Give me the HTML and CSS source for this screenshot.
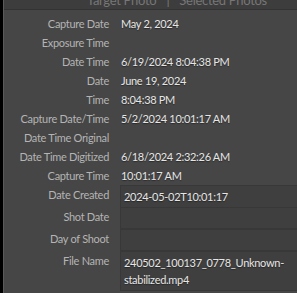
FILE: index.html
```html
<!DOCTYPE html>
<html lang="en">
<head>
  <meta charset="UTF-8" />
  <title>Metadata</title>
  <link rel="stylesheet" href="styles.css">
</head>
<body>
  <div class="panel">
    <div class="tabs">
      <span>Target Photo</span><span class="sep">|</span><span>Selected Photos</span>
    </div>
    <div class="fields">
      <div class="row"><span class="label">Capture Date</span><span class="value">May 2, 2024</span></div>
      <div class="row"><span class="label">Exposure Time</span><span class="value"></span></div>
      <div class="row"><span class="label">Date Time</span><span class="value">6/19/2024 8:04:38 PM</span></div>
      <div class="row"><span class="label">Date</span><span class="value">June 19, 2024</span></div>
      <div class="row"><span class="label">Time</span><span class="value">8:04:38 PM</span></div>
      <div class="row"><span class="label">Capture Date/Time</span><span class="value">5/2/2024 10:01:17 AM</span></div>
      <div class="row"><span class="label">Date Time Original</span><span class="value"></span></div>
      <div class="row"><span class="label">Date Time Digitized</span><span class="value">6/18/2024 2:32:26 AM</span></div>
      <div class="row"><span class="label">Capture Time</span><span class="value">10:01:17 AM</span></div>
      <div class="row edit"><span class="label">Date Created</span><span class="value box">2024-05-02T10:01:17</span></div>
      <div class="row edit"><span class="label">Shot Date</span><span class="value box"></span></div>
      <div class="row edit"><span class="label">Day of Shoot</span><span class="value box"></span></div>
      <div class="row edit tall"><span class="label">File Name</span><span class="value box">240502_100137_0778_Unknown-stabilized.mp4</span></div>
    </div>
  </div>
</body>
</html>
```

FILE: styles.css
```css
* { box-sizing: border-box; }
html, body {
  margin: 0; height: 100%;
  background: #000;
  overflow: hidden;
}
body { padding-left: 3px; }
.panel {
  height: 100%;
  background: #464646;
  border-left: 1px solid #5a5a5a;
  font-family: Lato, "Liberation Sans", sans-serif;
  font-size: 11px;
  letter-spacing: -0.3px;
}
.tabs {
  height: 10px; overflow: hidden;
  background: #3d3d3d;
  border-bottom: 1px solid #333;
  color: #777;
  display: flex; align-items: flex-end;
  padding-left: 83px; gap: 10px;
  line-height: 1;
  font-size: 13px;
}
.tabs span { transform: translateY(-2px); }
.fields { padding-top: 4px; }
.row {
  display: grid;
  grid-template-columns: 105px 1fr;
  column-gap: 12px;
  height: 19px;
  align-items: center;
}
.label {
  text-align: right;
  color: #b4b4b4;
  white-space: nowrap;
}
.value {
  color: #e6e6e6;
  text-shadow: 0 1px 1px rgba(0,0,0,0.4);
}
.row.edit { height: 22px; align-items: stretch; }
.row.edit .label { padding-top: 3px; }
.box {
  background: #3f3f3f;
  border: 1px solid #383838;
  border-right: none;
  padding: 2px 3px;
  line-height: 17px;
  margin-left: -1px;
}
.row.tall { height: 38px; }
```
